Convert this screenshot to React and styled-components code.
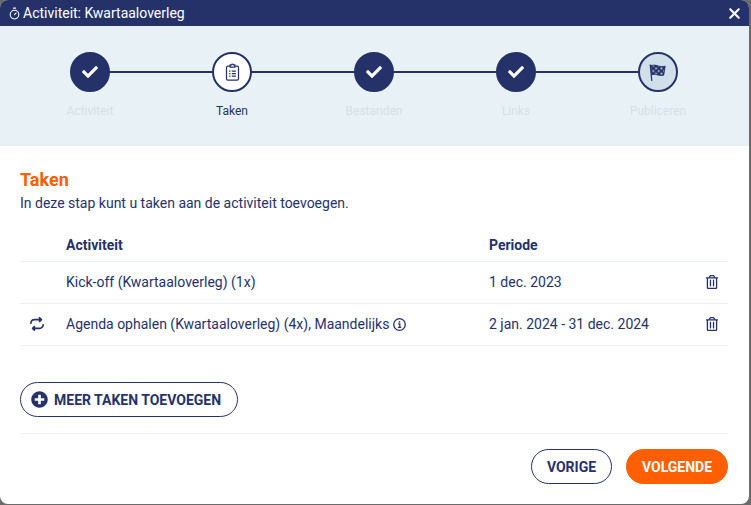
import React from 'react';
import styled, { createGlobalStyle } from 'styled-components';
import { FaCheck, FaPlusCircle, FaRegTrashAlt } from 'react-icons/fa';
import { FaRepeat, FaXmark } from 'react-icons/fa6';
import { Timer } from 'lucide-react';

const navy = '#253269';
const orange = '#ff5f00';

const GlobalStyle = createGlobalStyle`
  html, body {
    margin: 0;
    height: 100%;
    background: #6b6b6b;
  }
  body {
    font-family: Roboto, "Liberation Sans", sans-serif;
    color: ${navy};
    overflow: hidden;
  }
  * {
    box-sizing: border-box;
  }
`;

const Modal = styled.div`
  width: 749px;
  height: 504px;
  background: #fff;
  border-radius: 8px;
  overflow: hidden;
  display: flex;
  flex-direction: column;
`;

const TitleBar = styled.div`
  height: 26px;
  flex: none;
  background: ${navy};
  color: #fff;
  display: flex;
  align-items: center;
  justify-content: space-between;
  padding: 0 6px 0 8px;
  font-size: 14px;
`;

const Title = styled.div`
  display: flex;
  align-items: center;
  gap: 2px;
`;

const CloseButton = styled.button`
  border: none;
  background: none;
  color: #fff;
  padding: 0;
  display: flex;
  font-size: 17px;
`;

const StepPanel = styled.div`
  height: 120px;
  flex: none;
  background: #e8f2f6;
  padding: 26px 19px 0;
  display: grid;
  grid-template-columns: repeat(5, 142px);
  align-content: start;
`;

const Step = styled.div`
  position: relative;
  display: flex;
  flex-direction: column;
  align-items: center;
  gap: 10px;

  &:not(:first-child)::before {
    content: '';
    position: absolute;
    top: 19px;
    left: -50%;
    width: 100%;
    height: 2px;
    background: ${navy};
  }
`;

const StepCircle = styled.div`
  position: relative;
  z-index: 1;
  width: 40px;
  height: 40px;
  border-radius: 50%;
  border: 2px solid ${navy};
  display: flex;
  align-items: center;
  justify-content: center;
  color: ${(p) => (p.$state === 'done' ? '#fff' : navy)};
  background: ${(p) =>
    p.$state === 'done' ? navy : p.$state === 'current' ? '#fff' : '#d0dfea'};
  font-size: 16px;
`;

const StepLabel = styled.div`
  font-size: 12px;
  line-height: 18px;
  color: ${(p) => (p.$active ? navy : '#d3e0e8')};
`;

const Content = styled.div`
  flex: 1;
  display: flex;
  flex-direction: column;
  padding: 24px 21px 0 20px;
`;

const Heading = styled.h2`
  margin: 0;
  font-size: 18px;
  line-height: 20px;
  font-weight: 700;
  color: ${orange};
`;

const Intro = styled.p`
  margin: 3px 0 0;
  font-size: 14px;
  line-height: 20px;
`;

const Row = styled.div`
  display: grid;
  grid-template-columns: 46px 423px 1fr 32px;
  align-items: ${(p) => (p.$head ? 'end' : 'center')};
  height: ${(p) => (p.$head ? '49px' : '42px')};
  padding-bottom: ${(p) => (p.$head ? '8px' : '1px')};
  border-bottom: 1px solid #eaf0f3;
  font-size: 14px;
  font-weight: ${(p) => (p.$head ? 700 : 400)};
`;

const RepeatCell = styled.div`
  display: flex;
  padding-left: 10px;
  font-size: 14px;
`;

const ActivityCell = styled.div`
  display: flex;
  align-items: center;
  gap: 4px;
`;

const TrashCell = styled.div`
  display: flex;
  justify-content: center;
  font-size: 14px;
`;

const PillButton = styled.button`
  height: 35px;
  border-radius: 18px;
  border: 1px solid ${(p) => (p.$primary ? orange : navy)};
  background: ${(p) => (p.$primary ? orange : '#fff')};
  color: ${(p) => (p.$primary ? '#fff' : navy)};
  font-family: inherit;
  font-size: 14px;
  font-weight: 700;
  padding: 0;
  width: ${(p) => p.$width}px;
  display: flex;
  align-items: center;
  justify-content: center;
`;

const AddButton = styled(PillButton)`
  justify-content: flex-start;
  padding-left: 10px;
  gap: 6px;
`;

const AddRow = styled.div`
  margin-top: 36px;
  padding-bottom: 16px;
  border-bottom: 1px solid #eaf0f3;
`;

const Footer = styled.div`
  display: flex;
  justify-content: flex-end;
  gap: 14px;
  margin-top: 15px;
`;

const ClipboardIcon = () => (
  <svg width="15" height="19" viewBox="0 0 16 20" fill="none" stroke="currentColor" strokeWidth="1.3">
    <rect x="1.6" y="3.2" width="12.8" height="15" rx="1.5" />
    <path d="M5.5 3.2V1.9h1.4a1.2 1.2 0 0 1 2.2 0h1.4v2.4h-5z" fill="#fff" />
    <path d="M4.4 8.5h1.4M7.2 8.5h4.4M4.4 11.2h1.4M7.2 11.2h4.4M4.4 13.9h1.4M7.2 13.9h4.4" />
  </svg>
);

const FlagIcon = () => (
  <svg width="20" height="20" viewBox="0 0 20 20" fill="none" stroke="currentColor">
    <defs>
      <pattern id="checker" x="4" y="5" width="5.4" height="5.4" patternUnits="userSpaceOnUse">
        <rect width="5.4" height="5.4" fill="#d0dfea" />
        <rect width="2.7" height="2.7" fill="#253269" />
        <rect x="2.7" y="2.7" width="2.7" height="2.7" fill="#253269" />
      </pattern>
    </defs>
    <path d="M2.200 2.500 3.800 19" strokeWidth="1.200" />
    <path
      d="M2.800 3.800c3-1.200 5-.6 7.500.2 2 .6 4 .8 6.900.2l-1.500 9c-2 .6-4 .3-6-.3-2.500-.7-4.500-1-6 .1z"
      fill="url(#checker)"
      strokeWidth="0.900"
    />
  </svg>
);

const InfoIcon = () => (
  <svg width="13" height="13" viewBox="0 0 13 13" fill="none" stroke="currentColor">
    <circle cx="6.500" cy="6.500" r="5.800" strokeWidth="1.300" />
    <path d="M5.200 5.900h1.600v3.200M5 9.300h3.200" strokeWidth="1.300" />
    <path d="M5.700 3.200h1.500v1.500H5.700z" fill="currentColor" stroke="none" />
  </svg>
);

const steps = [
  { label: 'Activiteit', state: 'done' },
  { label: 'Taken', state: 'current', icon: <ClipboardIcon />, active: true },
  { label: 'Bestanden', state: 'done' },
  { label: 'Links', state: 'done' },
  { label: 'Publiceren', state: 'todo', icon: <FlagIcon /> },
];

export default function App() {
  return (
    <>
      <GlobalStyle />
      <Modal>
        <TitleBar>
          <Title>
            <Timer size={13} strokeWidth={2} />
            Activiteit: Kwartaaloverleg
          </Title>
          <CloseButton>
            <FaXmark />
          </CloseButton>
        </TitleBar>
        <StepPanel>
          {steps.map((step) => (
            <Step key={step.label}>
              <StepCircle $state={step.state}>{step.icon || <FaCheck />}</StepCircle>
              <StepLabel $active={step.active}>{step.label}</StepLabel>
            </Step>
          ))}
        </StepPanel>
        <Content>
          <Heading>Taken</Heading>
          <Intro>In deze stap kunt u taken aan de activiteit toevoegen.</Intro>
          <Row $head>
            <div />
            <div>Activiteit</div>
            <div>Periode</div>
            <div />
          </Row>
          <Row>
            <div />
            <div>Kick-off (Kwartaaloverleg) (1x)</div>
            <div>1 dec. 2023</div>
            <TrashCell>
              <FaRegTrashAlt />
            </TrashCell>
          </Row>
          <Row>
            <RepeatCell>
              <FaRepeat />
            </RepeatCell>
            <ActivityCell>
              Agenda ophalen (Kwartaaloverleg) (4x), Maandelijks <InfoIcon />
            </ActivityCell>
            <div>2 jan. 2024 - 31 dec. 2024</div>
            <TrashCell>
              <FaRegTrashAlt />
            </TrashCell>
          </Row>
          <AddRow>
            <AddButton $width={218}>
              <FaPlusCircle size={17} />
              MEER TAKEN TOEVOEGEN
            </AddButton>
          </AddRow>
          <Footer>
            <PillButton $width={81}>VORIGE</PillButton>
            <PillButton $primary $width={102}>VOLGENDE</PillButton>
          </Footer>
        </Content>
      </Modal>
    </>
  );
}
